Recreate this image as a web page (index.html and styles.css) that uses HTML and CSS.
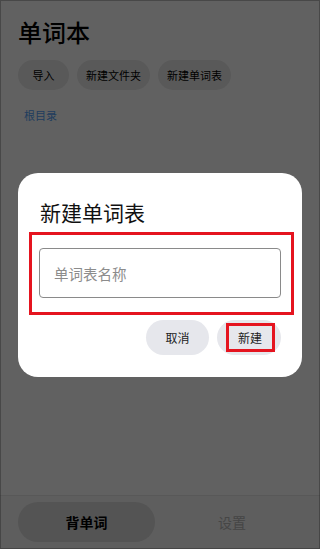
FILE: index.html
```html
<!DOCTYPE html>
<html lang="zh">
<head>
<meta charset="utf-8">
<link rel="stylesheet" href="styles.css">
</head>
<body>
<div class="app">
  <main class="page">
    <h1 class="title">单词本</h1>
    <div class="chips">
      <button class="chip">导入</button>
      <button class="chip">新建文件夹</button>
      <button class="chip">新建单词表</button>
    </div>
    <a class="crumb">根目录</a>
  </main>
  <nav class="tabbar">
    <div class="tab active">背单词</div>
    <div class="tab">设置</div>
  </nav>
  <div class="scrim"></div>
  <div class="dialog">
    <h2 class="dialog-title">新建单词表</h2>
    <div class="field-mark">
      <div class="input">单词表名称</div>
    </div>
    <div class="actions">
      <button class="btn">取消</button>
      <button class="btn"><span class="btn-mark">新建</span></button>
    </div>
  </div>
</div>
</body>
</html>
```
FILE: styles.css
```css
* { box-sizing: border-box; margin: 0; padding: 0; }
html, body { width: 320px; height: 549px; overflow: hidden; }
body {
  font-family: "Noto Sans CJK SC", "Noto Sans", sans-serif;
  background: #fff;
  color: #000;
}
.app {
  position: relative;
  width: 320px;
  height: 549px;
  display: flex;
  flex-direction: column;
  background: #fff;
}
.page {
  flex: 1;
  padding: 15px 18px 0;
}
.title {
  font-size: 24px;
  line-height: 34px;
  font-weight: 500;
  color: #000;
}
.chips {
  display: flex;
  gap: 8px;
  margin-top: 11px;
}
.chip {
  height: 30px;
  min-width: 51px;
  border: none;
  border-radius: 15px;
  background: #eaeaea;
  color: #000;
  font-family: inherit;
  font-size: 11px;
  padding: 0 9px;
}
.crumb {
  display: block;
  margin: 17px 0 0 6px;
  font-size: 11px;
  line-height: 16px;
  color: #559ff5;
}
.tabbar {
  height: 54px;
  border-top: 1px solid #e6e6e6;
  background: #f6f6f6;
  display: flex;
  align-items: center;
  padding: 0 18px 2px;
}
.tab {
  width: 137px;
  height: 40px;
  border-radius: 20px;
  display: flex;
  align-items: center;
  justify-content: center;
  font-size: 14px;
  color: #b8b8b8;
}
.tab + .tab { flex: 1; margin-left: 7px; }
.tab.active {
  background: #dcdcdc;
  color: #000;
  font-weight: 700;
}
.scrim {
  position: absolute;
  inset: 0;
  background: rgba(0, 0, 0, 0.62);
  border: 1px solid rgba(0,0,0,0.25);
}
.dialog {
  position: absolute;
  left: 18px;
  top: 173px;
  width: 284px;
  height: 204px;
  background: #fff;
  border-radius: 20px;
  padding: 25px 21px 0 11px;
  display: flex;
  flex-direction: column;
}
.dialog-title {
  font-size: 21px;
  line-height: 28px;
  font-weight: 400;
  color: #111;
  padding-left: 11px;
}
.field-mark {
  margin-top: 6px;
  margin-right: -13px;
  height: 83px;
  border: 3px solid #e5141f;
  padding: 13px 10px 0 7px;
}
.input {
  height: 50px;
  border: 1px solid #8a8a8a;
  border-radius: 4px;
  padding-left: 14px;
  display: flex;
  align-items: center;
  font-size: 14.5px;
  color: #8c8c8c;
}
.actions {
  margin-top: 5px;
  display: flex;
  justify-content: flex-end;
  gap: 8px;
}
.btn {
  width: 64px;
  height: 35px;
  border: none;
  border-radius: 18px;
  background: #e6e7ec;
  font-family: inherit;
  font-size: 12px;
  color: #222;
  display: flex;
  align-items: center;
  justify-content: center;
}
.btn:first-child { width: 63px; }
.btn-mark {
  width: 49px;
  height: 29px;
  border: 3px solid #e5141f;
  display: flex;
  align-items: center;
  justify-content: center;
  margin-left: 2px;
}
```
